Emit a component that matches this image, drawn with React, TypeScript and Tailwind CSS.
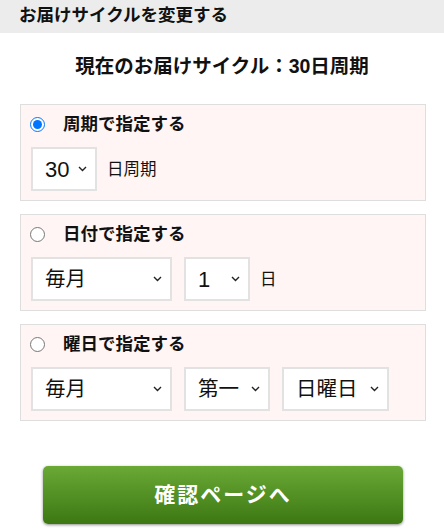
import React from "react";

const FONT = { fontFamily: '"Liberation Sans", "Noto Sans CJK JP", sans-serif' };

function Chevron() {
  return (
    <svg width="9" height="6" viewBox="0 0 9 6" className="shrink-0">
      <path d="M1 1 L4.5 4.5 L8 1" fill="none" stroke="#222" strokeWidth="1.4" />
    </svg>
  );
}

function FakeSelect({ value, width, digit }: { value: string; width: string; digit?: boolean }) {
  return (
    <div
      className={`${width} h-[44px] bg-white border-2 border-[#e2e2e2] flex items-center justify-between pl-[12px] pr-[8px] text-[#111] ${digit ? "text-[22px]" : "text-[20.5px]"}`}
    >
      <span>{value}</span>
      <Chevron />
    </div>
  );
}

function Radio({ checked }: { checked: boolean }) {
  return (
    <input
      type="radio"
      name="cycle"
      defaultChecked={checked}
      className="m-0 w-[15px] h-[15px] accent-[#0075ff]"
    />
  );
}

function Box({ checked, label, children }: { checked: boolean; label: string; children: React.ReactNode }) {
  return (
    <div className="ml-[20px] w-[406px] h-[97px] border border-[#dedede] bg-[#fff5f5] pl-[10px]">
      <div className="h-[38px] flex items-center pt-[1px]">
        <div className="w-[15px] -ml-[1px] flex items-center">
          <Radio checked={checked} />
        </div>
        <span className="ml-[18px] text-[17.5px] font-bold text-[#111]">{label}</span>
      </div>
      <div className="flex items-center mt-[4px]">{children}</div>
    </div>
  );
}

export default function App() {
  return (
    <div className="w-[444px] h-[529px] bg-white overflow-hidden" style={FONT}>
      <div className="h-[33px] bg-[#ececec] flex items-center pl-[19px] pb-[3px] text-[17.5px] font-bold text-[#111]">
        お届けサイクルを変更する
      </div>
      <div className="h-[71px] flex items-center justify-center text-[19.5px] font-bold text-[#111] pb-[4px]">
        現在のお届けサイクル：30日周期
      </div>
      <div className="flex flex-col gap-[13px]">
        <Box checked={true} label="周期で指定する">
          <FakeSelect value="30" width="w-[66px]" digit />
          <span className="ml-[10px] text-[16.5px] text-[#111]">日周期</span>
        </Box>
        <Box checked={false} label="日付で指定する">
          <FakeSelect value="毎月" width="w-[141px]" />
          <div className="ml-[12px]">
            <FakeSelect value="1" width="w-[66px]" digit />
          </div>
          <span className="ml-[10px] text-[16.5px] text-[#111]">日</span>
        </Box>
        <Box checked={false} label="曜日で指定する">
          <FakeSelect value="毎月" width="w-[141px]" />
          <div className="ml-[12px]">
            <FakeSelect value="第一" width="w-[86px]" />
          </div>
          <div className="ml-[12px]">
            <FakeSelect value="日曜日" width="w-[107px]" />
          </div>
        </Box>
      </div>
      <div className="mt-[45px] ml-[43px] w-[360px] h-[58px] rounded-[5px] bg-gradient-to-b from-[#6aa936] to-[#3c7811] shadow-[0_1px_3px_rgba(0,0,0,0.45)] flex items-center justify-center text-white font-bold text-[21px] tracking-[2px]">
        確認ページへ
      </div>
    </div>
  );
}
